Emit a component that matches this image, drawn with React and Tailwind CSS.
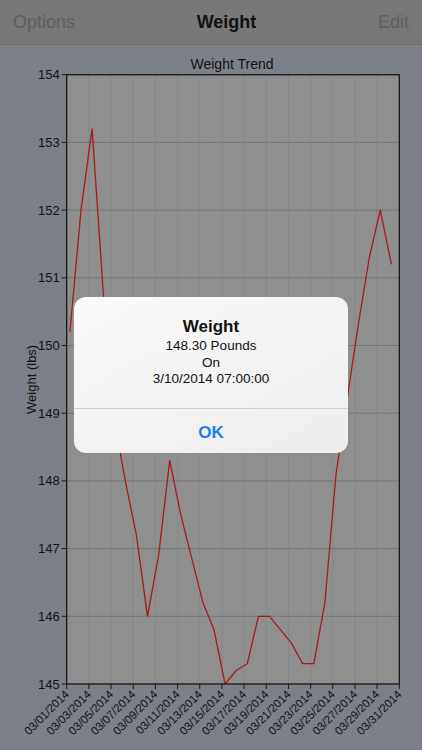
import React from 'react';

// plot geometry, page coordinates
const X0 = 66.7;
const X1 = 399.3;
const Y_TOP = 74.7;
const Y_BOT = 684;
const PER_DAY = (X1 - X0) / 30;
const PER_LB = (Y_BOT - Y_TOP) / 9;

const weights = [
  150.2, 152.0, 153.2, 150.8, 148.9, 148.0, 147.2, 146.0, 146.9, 148.3,
  147.5, 146.85, 146.2, 145.8, 145.0, 145.2, 145.3, 146.0, 146.0, 145.8,
  145.6, 145.3, 145.3, 146.2, 148.1, 149.2, 150.3, 151.3, 152.0, 151.2,
];

const xFor = (dayIndex) => X0 + dayIndex * PER_DAY;
const yFor = (v) => Y_BOT - (v - 145) * PER_LB;

const points = weights
  .map((w, i) => `${xFor(i + 0.29).toFixed(1)},${yFor(w).toFixed(1)}`)
  .join(' ');

const ticks = Array.from({ length: 16 }, (_, i) => i * 2);
const pad = (n) => String(n).padStart(2, '0');

const font = { fontFamily: '"Liberation Sans", Arial, sans-serif' };

const Chart = () => (
  <svg viewBox="0 45 422 705" className="block w-[422px] h-[705px]" style={font}>
    <text x="232" y="69" textAnchor="middle" fontSize="14" fill="#111">Weight Trend</text>
    <rect x={X0} y={Y_TOP} width={X1 - X0} height={Y_BOT - Y_TOP} fill="#8f8f8f" />

    {/* vertical grid */}
    {ticks.map((d) => (
      <line key={`v${d}`} x1={xFor(d)} x2={xFor(d)} y1={Y_TOP} y2={Y_BOT} stroke="#878787" strokeWidth="1" />
    ))}
    {/* horizontal grid + y labels */}
    {Array.from({ length: 10 }, (_, i) => 145 + i).map((v) => (
      <g key={`h${v}`}>
        <line x1={X0} x2={X1} y1={yFor(v)} y2={yFor(v)} stroke="#737373" strokeWidth="1" />
        <line x1={X0 - 5} x2={X0} y1={yFor(v)} y2={yFor(v)} stroke="#1a1a1a" strokeWidth="1" />
        <text x={X0 - 7} y={yFor(v) + 4.5} textAnchor="end" fontSize="13" fill="#111">{v}</text>
      </g>
    ))}

    <polyline points={points} fill="none" stroke="#a8191b" strokeWidth="1.3" strokeLinejoin="round" />

    <rect x={X0} y={Y_TOP} width={X1 - X0} height={Y_BOT - Y_TOP} fill="none" stroke="#1a1a1a" strokeWidth="1.3" />

    {/* x ticks + labels */}
    {ticks.map((d) => (
      <g key={`t${d}`}>
        <line x1={xFor(d)} x2={xFor(d)} y1={Y_BOT} y2={Y_BOT + 5} stroke="#1a1a1a" strokeWidth="1" />
        <text
          x={xFor(d) + 3}
          y={Y_BOT + 11}
          textAnchor="end"
          fontSize="11.5"
          fill="#111"
          transform={`rotate(-45 ${xFor(d) + 3} ${Y_BOT + 11})`}
        >
          {`03/${pad(d + 1)}/2014`}
        </text>
      </g>
    ))}

    <text x="36" y={(Y_TOP + Y_BOT) / 2} textAnchor="middle" fontSize="13" fill="#111" transform={`rotate(-90 36 ${(Y_TOP + Y_BOT) / 2})`}>
      Weight (lbs)
    </text>
  </svg>
);

const App = () => {
  return (
    <div className="relative w-[422px] h-[750px] overflow-hidden bg-[#7c8089]" style={font}>
      <div className="h-[45px] flex items-center justify-between px-[13px] bg-[#787878] border-b border-[#6e6e6e]">
        <span className="text-[18px] text-[#5e5e5e]">Options</span>
        <span className="text-[18px] font-bold text-[#111]">Weight</span>
        <span className="text-[18px] text-[#5e5e5e]">Edit</span>
      </div>
      <Chart />

      {/* alert */}
      <div className="absolute left-[74px] top-[297px] w-[274px] h-[156px] rounded-[12px] bg-gradient-to-br from-[#fafafa] to-[#ededed] flex flex-col">
        <div className="h-[111px] flex flex-col items-center pt-[19px] text-[#111]">
          <div className="text-[17px] font-bold leading-[22px]">Weight</div>
          <div className="text-[13.5px] leading-[16.5px]">148.30 Pounds</div>
          <div className="text-[13.5px] leading-[16.5px]">On</div>
          <div className="text-[13.5px] leading-[16.5px]">3/10/2014 07:00:00</div>
        </div>
        <div className="flex-1 border-t border-[#cfcfcf] flex items-center justify-center pt-[4px]">
          <span className="text-[17px] font-bold text-[#1b7ff0]">OK</span>
        </div>
      </div>
    </div>
  );
};

export default App;
